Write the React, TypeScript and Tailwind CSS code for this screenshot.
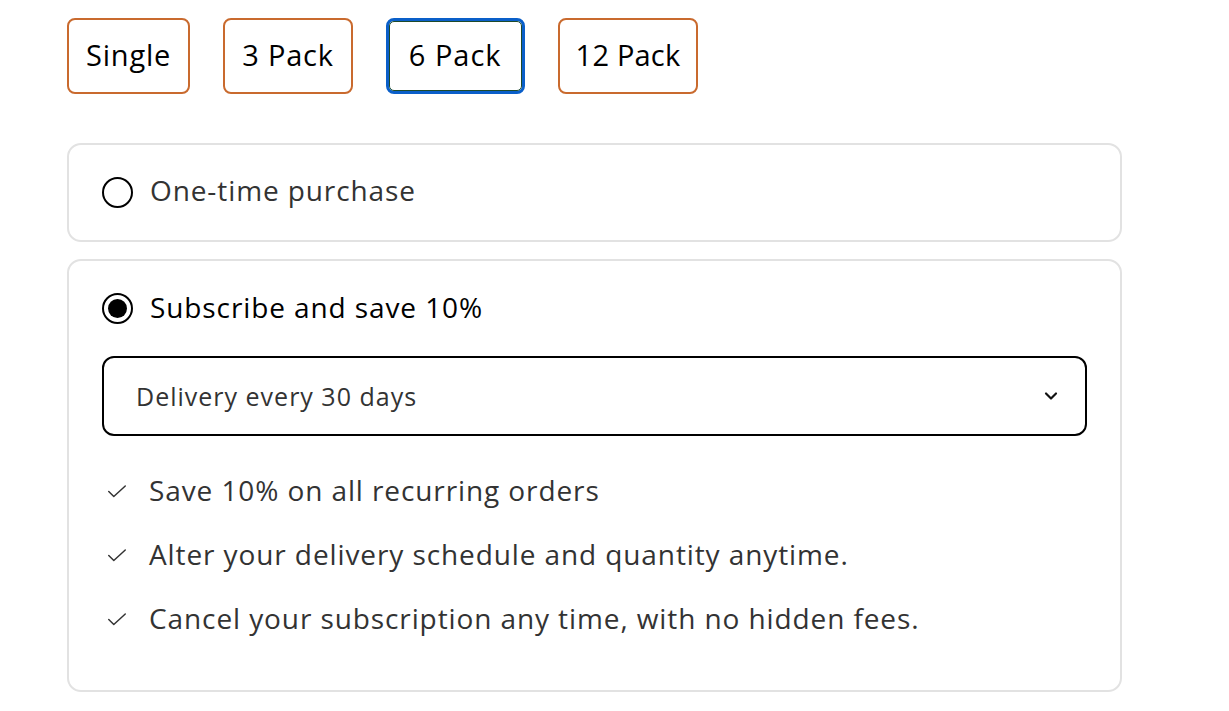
import React from "react";

const packs = ["Single", "3 Pack", "6 Pack", "12 Pack"];
const benefits = [
  "Save 10% on all recurring orders",
  "Alter your delivery schedule and quantity anytime.",
  "Cancel your subscription any time, with no hidden fees.",
];

function Check() {
  return (
    <svg width="22" height="22" viewBox="0 0 24 24" fill="none" stroke="#333" strokeWidth="1.6" strokeLinecap="round" strokeLinejoin="round">
      <path d="M3 12.5l5.5 5.5L21 6.5" />
    </svg>
  );
}

export default function App() {
  return (
    <div className="min-h-[711px] bg-white pl-[67px] pt-[18px]" style={{ fontFamily: '"Open Sans", sans-serif' }}>
      <div className="flex gap-[33px]">
        {packs.map((p) => (
          <button
            key={p}
            className={
              p === "6 Pack"
                ? "h-[76px] rounded-[8px] border-[3px] border-[#0a5fc9] px-[20px] pb-[3px] text-[29px] tracking-[1px] text-black outline outline-1 outline-offset-[-4px] outline-[#1d4a2a]"
                : p === "12 Pack"
                ? "h-[76px] rounded-[8px] border-2 border-[#c96a2e] px-[16px] pb-[3px] text-[29px] tracking-[0.2px] text-black"
                : "h-[76px] rounded-[8px] border-2 border-[#c96a2e] px-[17px] pb-[3px] text-[29px] tracking-[0.8px] text-black"
            }
          >
            {p}
          </button>
        ))}
      </div>

      <div className="mt-[49px] w-[1055px]">
        <div className="flex h-[99px] items-center gap-[17px] rounded-[14px] border-2 border-[#e2e2e2] px-[33px]">
          <span className="h-[31px] w-[31px] rounded-full border-2 border-black" />
          <span className="pb-[5px] text-[28px] tracking-[0.9px] text-[#333]">One-time purchase</span>
        </div>

        <div className="mt-[17px] rounded-[14px] border-2 border-[#e2e2e2] px-[33px] pb-[53px] pt-[26px]">
          <div className="flex h-[42px] items-center gap-[17px]">
            <span className="flex h-[31px] w-[31px] items-center justify-center rounded-full border-2 border-black">
              <span className="h-[19px] w-[19px] rounded-full bg-black" />
            </span>
            <span className="pb-[2px] text-[28px] tracking-[0.9px] text-black">Subscribe and save 10%</span>
          </div>

          <div className="mt-[27px] flex h-[80px] items-center justify-between rounded-[12px] border-2 border-black pl-[32px] pr-[24px]">
            <span className="pt-[2px] text-[25px] tracking-[1px] text-[#333]">Delivery every 30 days</span>
            <svg width="20" height="20" viewBox="0 0 24 24" fill="none" stroke="#111" strokeWidth="2.6" strokeLinecap="round" strokeLinejoin="round">
              <path d="M6 9l6 6 6-6" />
            </svg>
          </div>

          <div className="mt-[37px] flex flex-col gap-[28px]">
            {benefits.map((b) => (
              <div key={b} className="flex h-[36px] items-center gap-[21px] pl-[4px]">
                <Check />
                <span className="pb-[2px] text-[28px] tracking-[0.9px] text-[#333]">{b}</span>
              </div>
            ))}
          </div>
        </div>
      </div>
    </div>
  );
}
